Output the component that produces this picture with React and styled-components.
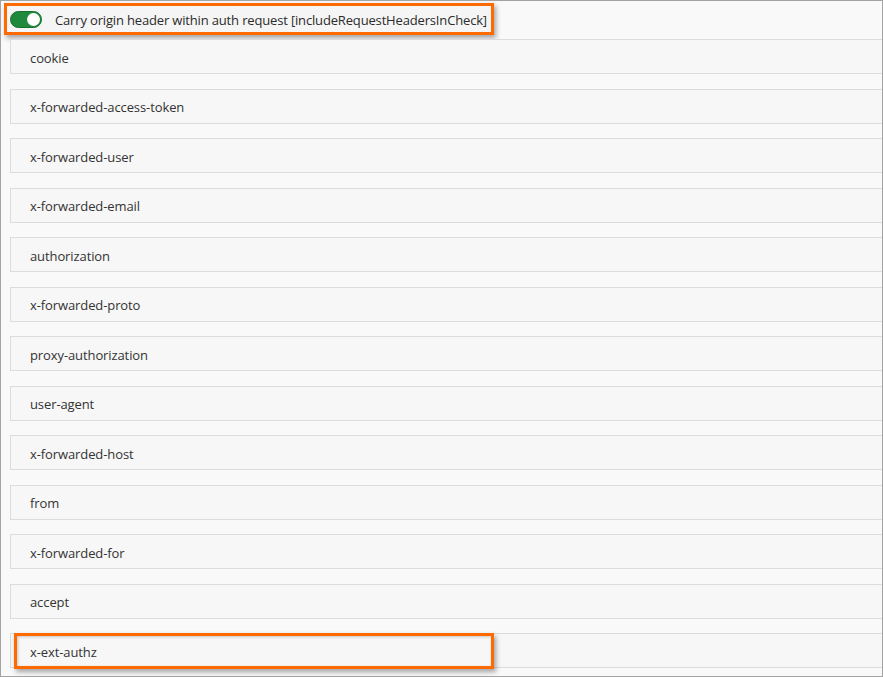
import React from "react";
import styled, { createGlobalStyle } from "styled-components";

const headers = [
  "cookie",
  "x-forwarded-access-token",
  "x-forwarded-user",
  "x-forwarded-email",
  "authorization",
  "x-forwarded-proto",
  "proxy-authorization",
  "user-agent",
  "x-forwarded-host",
  "from",
  "x-forwarded-for",
  "accept",
  "x-ext-authz",
];

function App() {
  return (
    <>
      <GlobalStyle />
      <Frame>
        <HeaderHighlight>
          <Toggle aria-checked="true" role="switch">
            <Knob />
          </Toggle>
          <Label>Carry origin header within auth request [includeRequestHeadersInCheck]</Label>
        </HeaderHighlight>
        <List>
          {headers.map((name, i) => (
            <Row key={name}>
              {name}
              {i === headers.length - 1 && <RowHighlight />}
            </Row>
          ))}
        </List>
      </Frame>
    </>
  );
}

const GlobalStyle = createGlobalStyle`
  html, body {
    margin: 0;
    padding: 0;
    background: #ffffff;
  }
  body {
    font-family: "Open Sans", "Liberation Sans", sans-serif;
  }
`;

const Frame = styled.div`
  box-sizing: border-box;
  width: 883px;
  height: 677px;
  border: 1px solid #a3a3a3;
  background: #f9f9f9;
  overflow: hidden;
  padding-top: 2px;
`;

const HeaderHighlight = styled.div`
  box-sizing: border-box;
  display: flex;
  align-items: center;
  width: 490px;
  height: 32px;
  margin-left: 3px;
  padding-left: 3px;
  border: 3px solid #ff6a00;
  background: #f5f5f5;
  box-shadow: 2px 3px 5px rgba(0, 0, 0, 0.35);
`;

const Toggle = styled.div`
  box-sizing: border-box;
  position: relative;
  width: 32px;
  height: 17px;
  border-radius: 9px;
  background: #1f8a3b;
  border: 1px solid #16702e;
  flex-shrink: 0;
`;

const Knob = styled.span`
  position: absolute;
  right: 1px;
  top: 1px;
  width: 13px;
  height: 13px;
  border-radius: 50%;
  background: #ffffff;
`;

const Label = styled.span`
  margin-left: 13px;
  padding-top: 1px;
  font-size: 13px;
  color: #2b2b2b;
  white-space: nowrap;
  letter-spacing: -0.16px;
`;

const List = styled.div`
  display: flex;
  flex-direction: column;
  gap: 14.5px;
  margin-top: 4px;
  padding-left: 9px;
`;

const Row = styled.div`
  box-sizing: border-box;
  position: relative;
  width: 900px;
  height: 35px;
  display: flex;
  align-items: center;
  padding: 2px 0 0 19px;
  border: 1px solid #dcdcdc;
  background: #f7f7f7;
  font-size: 13px;
  color: #333333;
  letter-spacing: -0.1px;
`;

const RowHighlight = styled.span`
  position: absolute;
  left: 3px;
  top: -1px;
  width: 480px;
  height: 36px;
  box-sizing: border-box;
  border: 3px solid #ff6a00;
  box-shadow: 2px 3px 5px rgba(0, 0, 0, 0.35), inset 1px 1px 3px rgba(0, 0, 0, 0.2);
  pointer-events: none;
`;

export default App;
